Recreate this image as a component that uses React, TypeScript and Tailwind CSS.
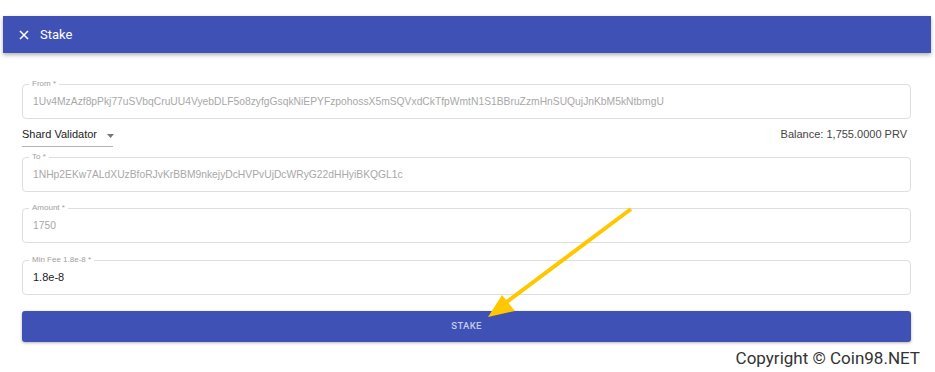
import React from "react";

function Field({ label, value, dark }: { label: string; value: string; dark?: boolean }) {
  return (
    <div className="relative h-[35px] rounded-[4px] border border-[#dedede] flex items-center pl-[10px]">
      <span className="absolute -top-[6px] left-[6px] bg-white px-[3px] text-[8px] leading-[10px] text-[#9e9e9e]">
        {label}
      </span>
      <span
        className={
          dark
            ? "text-[11px] text-[#222] whitespace-nowrap"
            : "text-[10.3px] text-[#a8a8a8] whitespace-nowrap"
        }
      >
        {value}
      </span>
    </div>
  );
}

export default function App() {
  return (
    <div
      className="relative w-[935px] h-[372px] bg-white overflow-hidden"
      style={{ fontFamily: '"Liberation Sans", Arial, sans-serif' }}
    >
      <div className="h-[16px]" />
      <div
        className="ml-[3px] w-[928px] h-[37px] bg-[#3f51b5] flex items-center shadow-[0_2px_4px_rgba(0,0,0,0.3)]"
        style={{ fontFamily: 'Roboto, "Liberation Sans", sans-serif' }}
      >
        <svg className="ml-[16px]" width="10" height="10" viewBox="0 0 10 10">
          <path d="M1 1 L9 9 M9 1 L1 9" stroke="#fff" strokeWidth="1.5" fill="none" />
        </svg>
        <span className="ml-[11px] text-[13px] text-white">Stake</span>
      </div>

      <div className="pl-[22px] pr-[24px] pt-[31px]">
        <Field
          label="From *"
          value="1Uv4MzAzf8pPkj77uSVbqCruUU4VyebDLF5o8zyfgGsqkNiEPYFzpohossX5mSQVxdCkTfpWmtN1S1BBruZzmHnSUQujJnKbM5kNtbmgU"
        />
        <div className="h-[28px] flex items-end justify-between">
          <div className="w-[91px] h-[28px] pt-[4px] border-b border-[#b5b5b5] flex items-center whitespace-nowrap">
            <span className="text-[11px] text-[#222]">Shard Validator</span>
            <svg className="ml-[10px] mt-[2px] shrink-0" width="7" height="4" viewBox="0 0 7 4">
              <path d="M0 0 L7 0 L3.5 4 Z" fill="#777" />
            </svg>
          </div>
          <div className="h-[28px] pt-[2px] flex items-center pr-[4px] text-[11px] text-[#444] whitespace-nowrap">
            Balance: 1,755.0000 PRV
          </div>
        </div>
        <div className="mt-[10px]">
          <Field label="To *" value="1NHp2EKw7ALdXUzBfoRJvKrBBM9nkejyDcHVPvUjDcWRyG22dHHyiBKQGL1c" />
        </div>
        <div className="mt-[16px]">
          <Field label="Amount *" value="1750" />
        </div>
        <div className="mt-[17px]">
          <Field label="Min Fee 1.8e-8 *" value="1.8e-8" dark />
        </div>
        <div
          className="mt-[16px] h-[31px] rounded-[3px] bg-[#3f51b5] flex items-center justify-center shadow-[0_1px_3px_rgba(0,0,0,0.3)]"
          style={{ fontFamily: 'Roboto, "Liberation Sans", sans-serif' }}
        >
          <span className="text-[9.5px] font-medium text-[#c5cae9] tracking-[0.3px]">STAKE</span>
        </div>
      </div>

      <div className="flex justify-end pr-[15px] mt-[5px]">
        <span
          className="text-[17px] leading-[22px] text-[#333]"
          style={{ fontFamily: 'Roboto, "Liberation Sans", sans-serif' }}
        >
          Copyright © Coin98.NET
        </span>
      </div>

      <svg className="absolute left-0 top-0 pointer-events-none" width="935" height="372" viewBox="0 0 935 372">
        <line x1="631" y1="209" x2="500" y2="307" stroke="#ffc700" strokeWidth="4" />
        <polygon points="488,317 502,295 515,311" fill="#ffc700" />
      </svg>
    </div>
  );
}
